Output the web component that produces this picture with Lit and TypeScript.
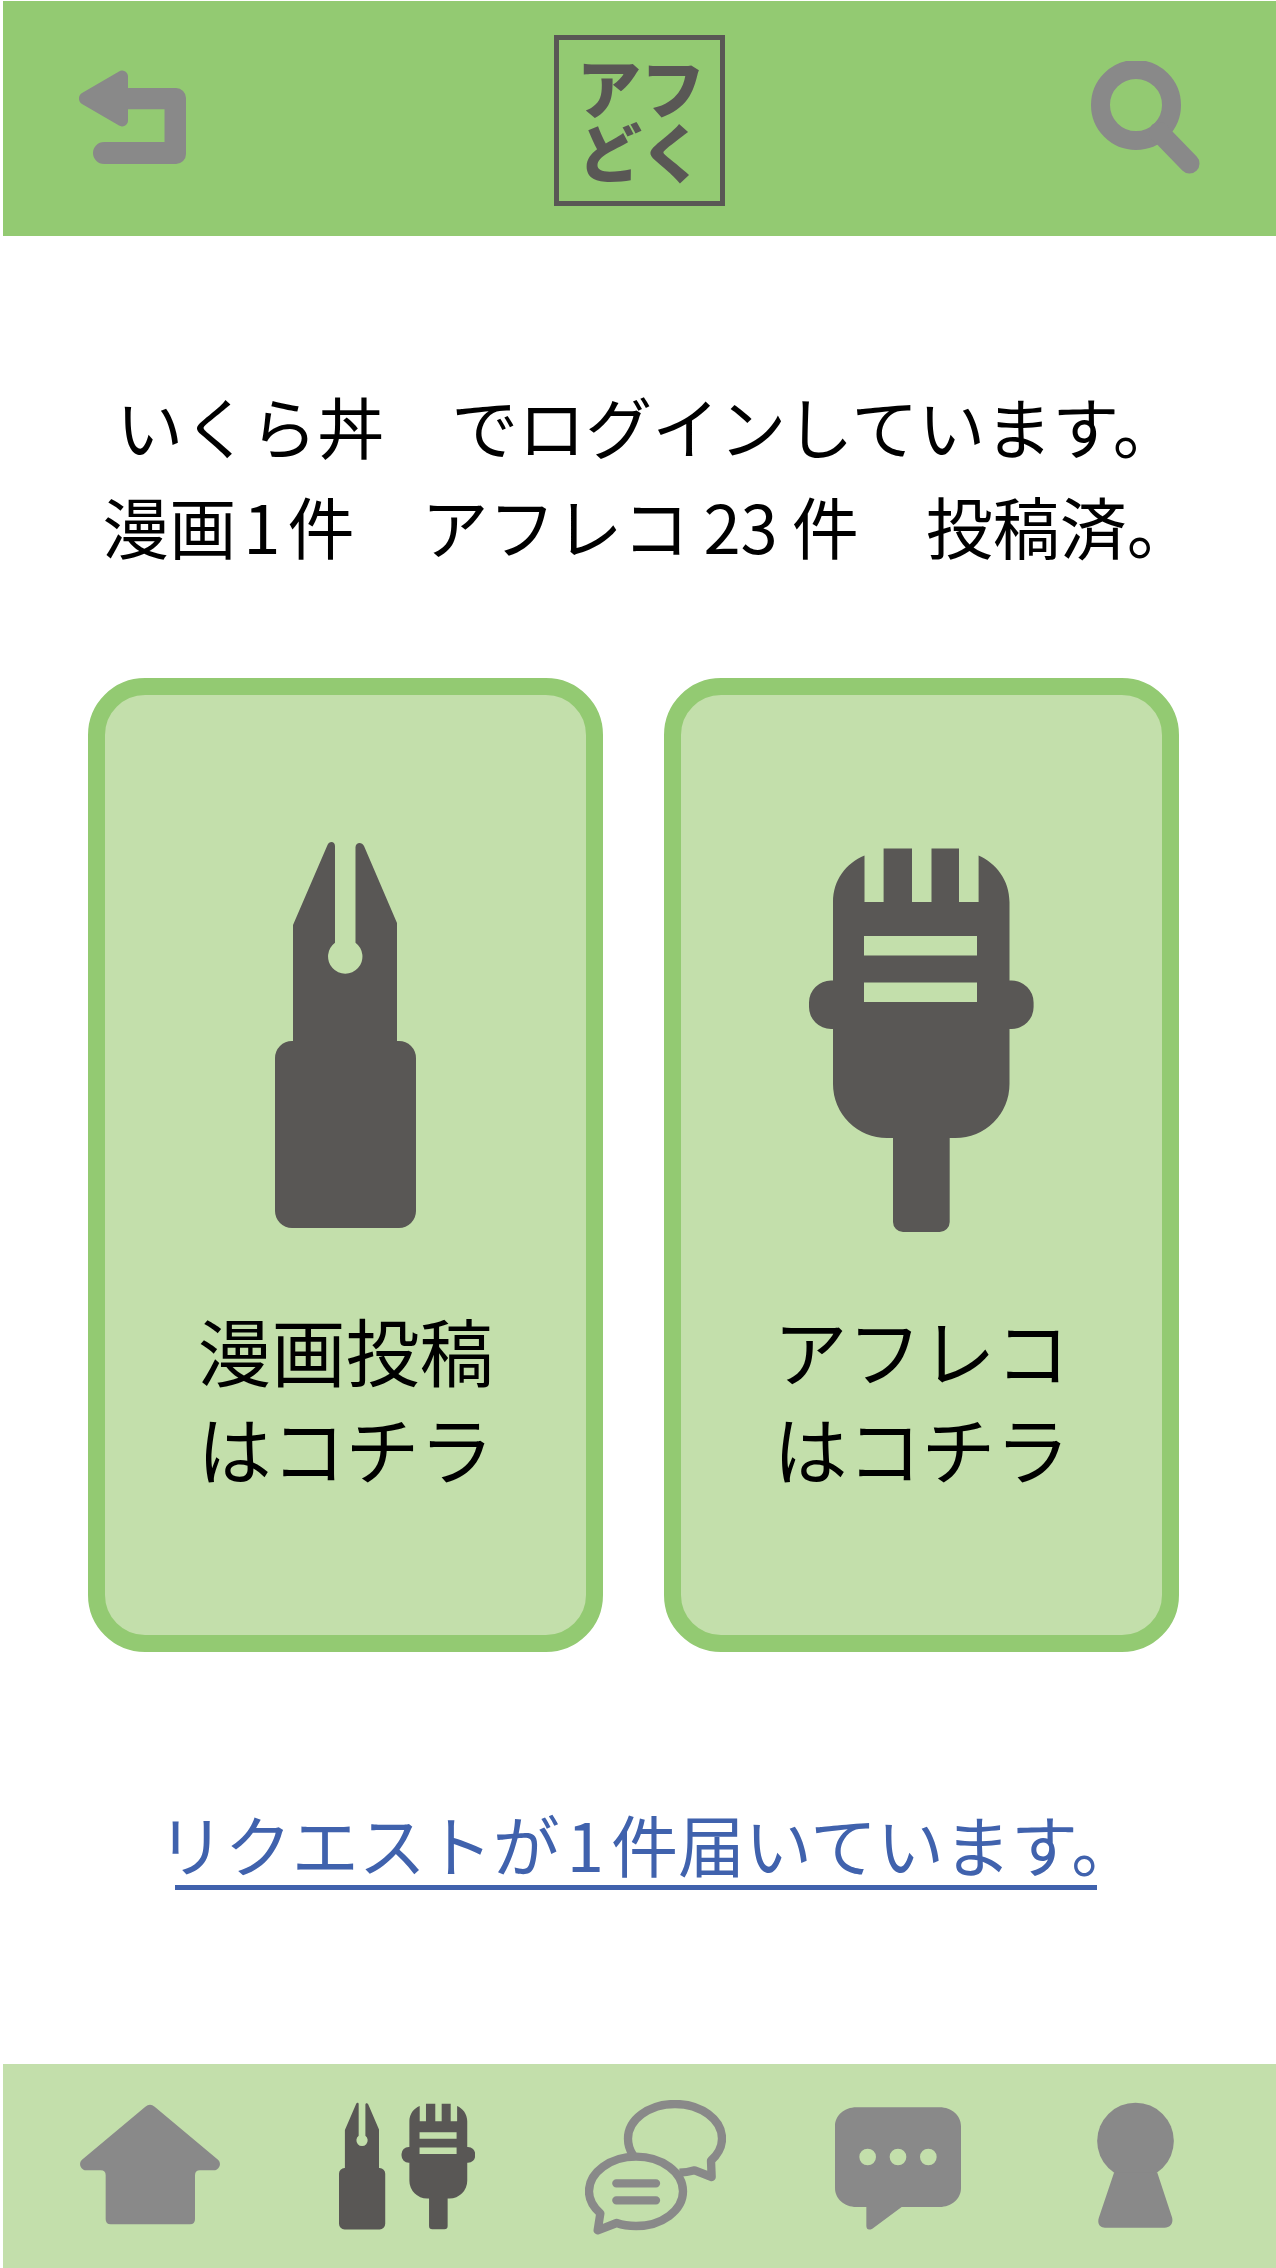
import { LitElement, html, css, svg } from "lit";
import { customElement } from "lit/decorators.js";

const penShape = svg`<path d="M18 83L52.5 3C54-1 60-1 60 4V100.7A17.2 17.2 0 1 0 80.5 100.7V5C81 0 87 0 89 4L122 81V199H124a17 17 0 0 1 17 17V369a17 17 0 0 1-17 17H17a17 17 0 0 1-17-17V216a17 17 0 0 1 17-17h1z"/>`;

const micShape = svg`<path fill-rule="evenodd" d="M24 60C24 38 37 21 55.5 13.4V60H74.6V6.5H103V60h19.5V6.5H150V60h19.6V13.4C187 21 200.5 38 200.5 60V138.5H202.6a22 22 0 0 1 22 22v4.5a22 22 0 0 1-22 22H200.5V242a54 54 0 0 1-54 54H140.7V380a10 10 0 0 1-10 10H94a10 10 0 0 1-10-10V296H78a54 54 0 0 1-54-54V187H22a22 22 0 0 1-22-22v-4.5a22 22 0 0 1 22-22h2zM55 94v19.6h113V94zM55 140.4V160h113v-19.6z"/>`;

@customElement("app-header")
export class AppHeader extends LitElement {
  static styles = css`
    :host {
      display: block;
    }
    .bar {
      display: grid;
      grid-template-columns: 1fr auto 1fr;
      align-items: center;
      box-sizing: border-box;
      padding: 34px 76px 30px;
      background: #93ca72;
    }
    .action {
      padding: 0;
      border: 0;
      background: none;
      color: #898989;
      cursor: pointer;
    }
    .back {
      justify-self: start;
    }
    .search {
      justify-self: end;
    }
    .action svg {
      display: block;
      fill: currentColor;
    }
    .logo {
      display: block;
      margin: 0;
      padding: 13px 15px 20px 18px;
      border: 5px solid #595755;
      color: #595755;
      font-size: 64px;
      font-weight: 900;
      line-height: 64px;
      text-align: center;
    }
  `;

  render() {
    return html`
      <header class="bar">
        <button class="action back" aria-label="戻る">
          <svg width="107" height="119" viewBox="0 0 107 119" aria-hidden="true">
            <path d="M49 15a6 6 0 0 0-9-4.6L3 32a6.5 6.5 0 0 0 0 11L40 64.6a6 6 0 0 0 9-4.6V48.3H85.5V81H25a11 11 0 0 0 0 22H97a10 10 0 0 0 10-10V37a10 10 0 0 0-10-10H49z"/>
          </svg>
        </button>
        <h1 class="logo">アフ<br />どく</h1>
        <button class="action search" aria-label="検索">
          <svg width="109" height="119" viewBox="0 0 109 119" aria-hidden="true">
            <circle cx="45" cy="44" r="35.5" fill="none" stroke="currentColor" stroke-width="19"/>
            <path d="M68 71L98.500 102.500" stroke="currentColor" stroke-width="20" stroke-linecap="round"/>
          </svg>
        </button>
      </header>
    `;
  }
}

@customElement("app-tabs")
export class AppTabs extends LitElement {
  static styles = css`
    :host {
      display: block;
    }
    .tabs {
      display: grid;
      grid-template-columns: 256fr 258fr 239fr 246fr 229fr;
      padding: 36px 26px 33px 19px;
      background: #c3dfab;
    }
    .tab {
      display: flex;
      justify-content: center;
      color: #898989;
    }
    .current {
      color: #595755;
    }
    .tab svg {
      display: block;
      fill: currentColor;
    }
    .tab .outline {
      fill: none;
      stroke: currentColor;
      stroke-width: 25;
      stroke-linejoin: round;
    }
  `;

  render() {
    return html`
      <nav class="tabs">
        <a class="tab" href="#home" aria-label="ホーム">
          <svg width="140" height="135" viewBox="0 0 420 405" aria-hidden="true">
            <path d="M196 20q14-11 28 0L414 179c12 11 4 32-12 32H360q-15 0-15 15V358q0 15-15 15H92q-15 0-15-15V226q0-15-15-15H18C2 211-6 190 6 179z"/>
          </svg>
        </a>
        <a class="tab current" href="#post" aria-label="投稿" aria-current="page">
          <svg width="136" height="135" viewBox="0 0 409 405" aria-hidden="true">
            <g transform="translate(0 8) scale(.986)">${penShape}</g>
            <g transform="translate(188 4) scale(.986)">${micShape}</g>
          </svg>
        </a>
        <a class="tab" href="#talk" aria-label="トーク">
          <svg width="141" height="135" viewBox="0 0 423 405" aria-hidden="true">
            <path class="outline" d="M144 165C134 150 129 133 129 116C129 59 192 12 270 12C348 12 411 59 411 116C411 140 399 163 378 182L380 231L329 211C315 215 300 218 283 218"/>
            <path class="outline" d="M95 369C112 375 133 378 153 378C231 378 294 331 294 274C294 217 231 170 153 170C76 170 12 217 12 274C12 299 25 322 46 340L38 391Z"/>
            <path class="outline" stroke-linecap="round" d="M94 250H213M94 301H213"/>
          </svg>
        </a>
        <a class="tab" href="#message" aria-label="メッセージ">
          <svg width="126" height="135" viewBox="0 0 378 405" aria-hidden="true">
            <path fill-rule="evenodd" d="M64 22H314C350 22 378 47 378 79V264C378 296 350 321 314 321H200L112 386q-17 8-18-8V321H64C28 321 0 296 0 264V79C0 47 28 22 64 22zM73 171a25 25 0 1 0 50 0a25 25 0 1 0-50 0zM164 171a25 25 0 1 0 50 0a25 25 0 1 0-50 0zM255 171a25 25 0 1 0 50 0a25 25 0 1 0-50 0z"/>
          </svg>
        </a>
        <a class="tab" href="#account" aria-label="アカウント">
          <svg width="77" height="135" viewBox="0 0 231 405" aria-hidden="true">
            <circle cx="115.500" cy="123" r="115"/>
            <path d="M51 218L6 352C-1 372 10 383 24 383H203C220 383 230 370 225 352L181 218z"/>
          </svg>
        </a>
      </nav>
    `;
  }
}

@customElement("app-root")
export class AppRoot extends LitElement {
  static styles = css`
    :host {
      display: flex;
      flex-direction: column;
      box-sizing: border-box;
      min-height: 100vh;
      padding: 1px 0 0 3px;
      background: #fff;
      color: #000;
      font-family: "Noto Sans CJK JP", sans-serif;
      font-weight: 400;
    }
    .page {
      flex: 1;
      padding-top: 139px;
    }
    .status {
      margin: 0;
      padding-left: 17px;
      font-size: 67px;
      line-height: 100px;
      text-align: center;
    }
    .line {
      display: block;
    }
    .one {
      margin: 0 7px;
    }
    .count {
      margin: 0 14px;
    }
    .cards {
      display: grid;
      grid-template-columns: 1fr 1fr;
      gap: 61px;
      margin-top: 103px;
      padding: 0 97px 0 85px;
    }
    .card {
      display: flex;
      flex-direction: column;
      align-items: center;
      gap: 68px;
      padding: 147px 0 139px;
      border: 17px solid #93ca72;
      border-radius: 57px;
      background: #c3dfab;
      color: #000;
      font-size: 74px;
      line-height: 98px;
      text-decoration: none;
    }
    .card svg {
      display: block;
      fill: #595755;
    }
    .request {
      display: flex;
      justify-content: center;
      margin-top: 149px;
      padding-left: 17px;
      font-size: 67px;
      line-height: 84px;
    }
    .link {
      color: #4062ad;
      text-decoration: none;
    }
    .link::after {
      content: "";
      display: block;
      height: 5px;
      margin: 0 41px 0 17px;
      background: currentColor;
    }
  `;

  render() {
    return html`
      <app-header></app-header>
      <main class="page">
        <p class="status">
          <span class="line">いくら丼　でログインしています。</span>
          <span class="line">漫画<span class="one">1</span>件　アフレコ<span class="count">23</span>件　投稿済。</span>
        </p>
        <div class="cards">
          <a class="card" href="#manga">
            <svg width="141" height="390" viewBox="0 0 141 390" aria-hidden="true">${penShape}</svg>
            <span>漫画投稿<br />はコチラ</span>
          </a>
          <a class="card" href="#voice">
            <svg width="225" height="390" viewBox="0 0 225 390" aria-hidden="true">${micShape}</svg>
            <span>アフレコ<br />はコチラ</span>
          </a>
        </div>
        <div class="request">
          <a class="link" href="#requests">リクエストが<span class="one">1</span>件届いています。</a>
        </div>
      </main>
      <app-tabs></app-tabs>
    `;
  }
}
